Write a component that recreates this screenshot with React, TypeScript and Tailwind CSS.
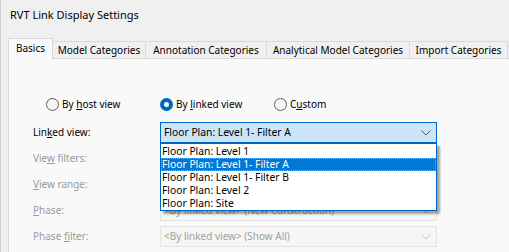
import React from 'react';

function Chevron({ color }: { color: string }) {
  return (
    <svg width="10" height="6" viewBox="0 0 10 6" fill="none">
      <path d="M0.5 0.5 L5 5 L9.5 0.5" stroke={color} strokeWidth="1" />
    </svg>
  );
}

function Radio({ checked, children }: { checked?: boolean; children: React.ReactNode }) {
  return (
    <div className="w-[114px] flex items-center gap-[3px]">
      {checked ? (
        <span className="w-[13px] h-[13px] rounded-full bg-[#0067c0] flex items-center justify-center">
          <span className="w-[5px] h-[5px] rounded-full bg-white" />
        </span>
      ) : (
        <span className="w-[13px] h-[13px] rounded-full border border-[#5f5f5f] bg-[#f6f6f6]" />
      )}
      <span className="text-black">{children}</span>
    </div>
  );
}

function DisabledCombo({ text }: { text?: string }) {
  return (
    <div className="h-[21px] border border-[#e3e3e3] bg-[#f6f6f6] flex items-center justify-between pl-[3px] pr-[5px] text-[#a0a0a0]">
      <span>{text}</span>
      <Chevron color="#c4c4c4" />
    </div>
  );
}

const items = [
  'Floor Plan: Level 1',
  'Floor Plan: Level 1- Filter A',
  'Floor Plan: Level 1- Filter B',
  'Floor Plan: Level 2',
  'Floor Plan: Site',
];

export default function App() {
  return (
    <div className="w-[509px] h-[252px] overflow-hidden bg-[#f0f0f0] border-l border-[#cfcfcf] font-['Noto_Sans',sans-serif] text-[10px] leading-[13px] text-black">
      <div className="h-[38px] pl-[9px] pt-[8px] text-[11px]">RVT Link Display Settings</div>

      <div className="flex items-end h-[21px] pl-[7px] relative z-10">
        <div className="w-[45px] h-[21px] bg-[#f9f9f9] border-l border-t border-r border-[#d9d9d9] pt-[3px] text-center">
          Basics
        </div>
        <div className="w-[93px] h-[18px] border-t border-r border-b border-[#d9d9d9] text-center pt-[2px]">
          Model Categories
        </div>
        <div className="w-[121px] h-[18px] border-t border-r border-b border-[#d9d9d9] text-center pt-[2px]">
          Annotation Categories
        </div>
        <div className="w-[143px] h-[18px] border-t border-r border-b border-[#d9d9d9] text-center pt-[2px]">
          Analytical Model Categories
        </div>
        <div className="w-[98px] h-[18px] border-t border-r border-b border-[#d9d9d9] text-center pt-[2px]">
          Import Categories
        </div>
      </div>

      <div className="ml-[7px] -mt-px w-[530px] h-[220px] border border-[#d9d9d9] bg-[#f9f9f9] pt-[38px]">
        <div className="flex items-center h-[14px] pl-[37px]">
          <Radio>
            By <span className="underline">h</span>ost view
          </Radio>
          <Radio checked>
            By <span className="underline">l</span>inked view
          </Radio>
          <Radio>
            C<span className="underline">u</span>stom
          </Radio>
        </div>

        <div className="mt-[11px] pl-[24px] grid grid-cols-[127px_277px] gap-y-[5px] items-center">
          <div>
            Lin<span className="underline">k</span>ed view:
          </div>
          <div className="relative z-20">
            <div className="h-[21px] border border-[#0067c0] bg-[#cce4f7] flex items-center justify-between pl-[3px] pr-[5px] text-[10.3px]">
              <span>Floor Plan: Level 1- Filter A</span>
              <Chevron color="#5a5a5a" />
            </div>
            <div className="absolute top-[21px] left-0 w-[277px] h-[68px] pt-px bg-white border border-[#0067c0] shadow-[3px_3px_2px_rgba(0,0,0,0.35)] text-[10.3px]">
              {items.map((t, i) =>
                i === 1 ? (
                  <div key={t} className="h-[13px] bg-[#0078d7] text-white pl-px outline-1 outline-dotted outline-[#f0a030] -outline-offset-1">
                    {t}
                  </div>
                ) : (
                  <div key={t} className="h-[13px] pl-px">
                    {t}
                  </div>
                )
              )}
            </div>
          </div>

          <div className="text-[#999999]">
            Vie<span className="underline">w</span> filters:
          </div>
          <DisabledCombo />

          <div className="text-[#999999]">
            <span className="underline">V</span>iew range:
          </div>
          <DisabledCombo />

          <div className="text-[#999999]">
            <span className="underline">P</span>hase:
          </div>
          <DisabledCombo text="<By linked view> (New Construction)" />

          <div className="text-[#999999]">
            Phase <span className="underline">f</span>ilter:
          </div>
          <DisabledCombo text="<By linked view> (Show All)" />
        </div>
      </div>
    </div>
  );
}
